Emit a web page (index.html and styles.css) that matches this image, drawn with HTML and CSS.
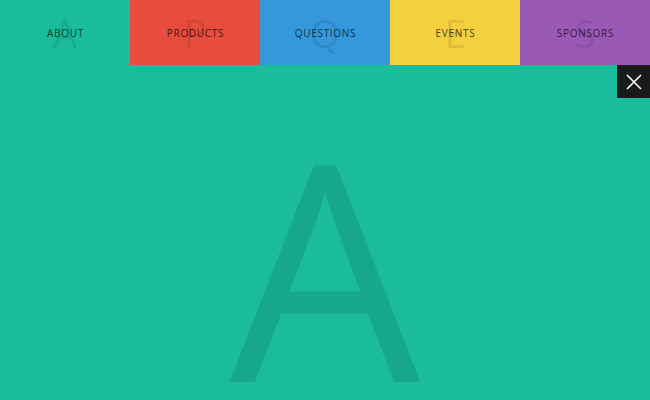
FILE: index.html
```html
<!DOCTYPE html>
<html>
<head>
<meta charset="utf-8">
<link rel="stylesheet" href="styles.css">
</head>
<body>
<nav class="nav">
  <a class="item teal"><span class="bg" aria-hidden="true">A</span><span class="label">ABOUT</span></a>
  <a class="item red"><span class="bg" aria-hidden="true">P</span><span class="label">PRODUCTS</span></a>
  <a class="item blue"><span class="bg" aria-hidden="true">Q</span><span class="label">QUESTIONS</span></a>
  <a class="item yellow"><span class="bg" aria-hidden="true">E</span><span class="label">EVENTS</span></a>
  <a class="item purple"><span class="bg" aria-hidden="true">S</span><span class="label">SPONSORS</span></a>
</nav>
<main class="main">
  <div class="big">A</div>
  <button class="close" aria-label="Close">
    <svg width="16" height="16" viewBox="0 0 16 16"><path d="M1 1L15 15M15 1L1 15" stroke="#fff" stroke-width="1.6" fill="none"/></svg>
  </button>
</main>
</body>
</html>
```
FILE: styles.css
```css
html, body {
  margin: 0;
  padding: 0;
  height: 100%;
  overflow: hidden;
}
body {
  background: #1abc9c;
  font-family: "Open Sans", "Liberation Sans", sans-serif;
}
.nav {
  display: flex;
  height: 65px;
}
.item {
  width: 130px;
  height: 65px;
  display: grid;
  place-items: center;
  text-decoration: none;
}
.item > span {
  grid-area: 1 / 1;
}
.bg {
  font-size: 38px;
  line-height: 1;
  color: rgba(0, 0, 0, 0.1);
}
.label {
  font-size: 10px;
  letter-spacing: 0.7px;
  color: rgba(0, 0, 0, 0.72);
  padding-left: 1px;
}
.teal { background: #1abc9c; }
.red { background: #e74c3c; }
.blue { background: #3498db; }
.yellow { background: #f4d03f; }
.purple { background: #9b59b6; }
.main {
  position: relative;
  height: 335px;
  overflow: hidden;
}
.big {
  text-align: center;
  font-size: 302px;
  line-height: 1;
  padding-top: 49px;
  color: rgba(0, 0, 0, 0.1);
}
.close {
  position: absolute;
  top: 0;
  right: 0;
  width: 33px;
  height: 33px;
  border: 0;
  padding: 0;
  background: #1a1a1a;
  display: flex;
  align-items: center;
  justify-content: center;
}
```
